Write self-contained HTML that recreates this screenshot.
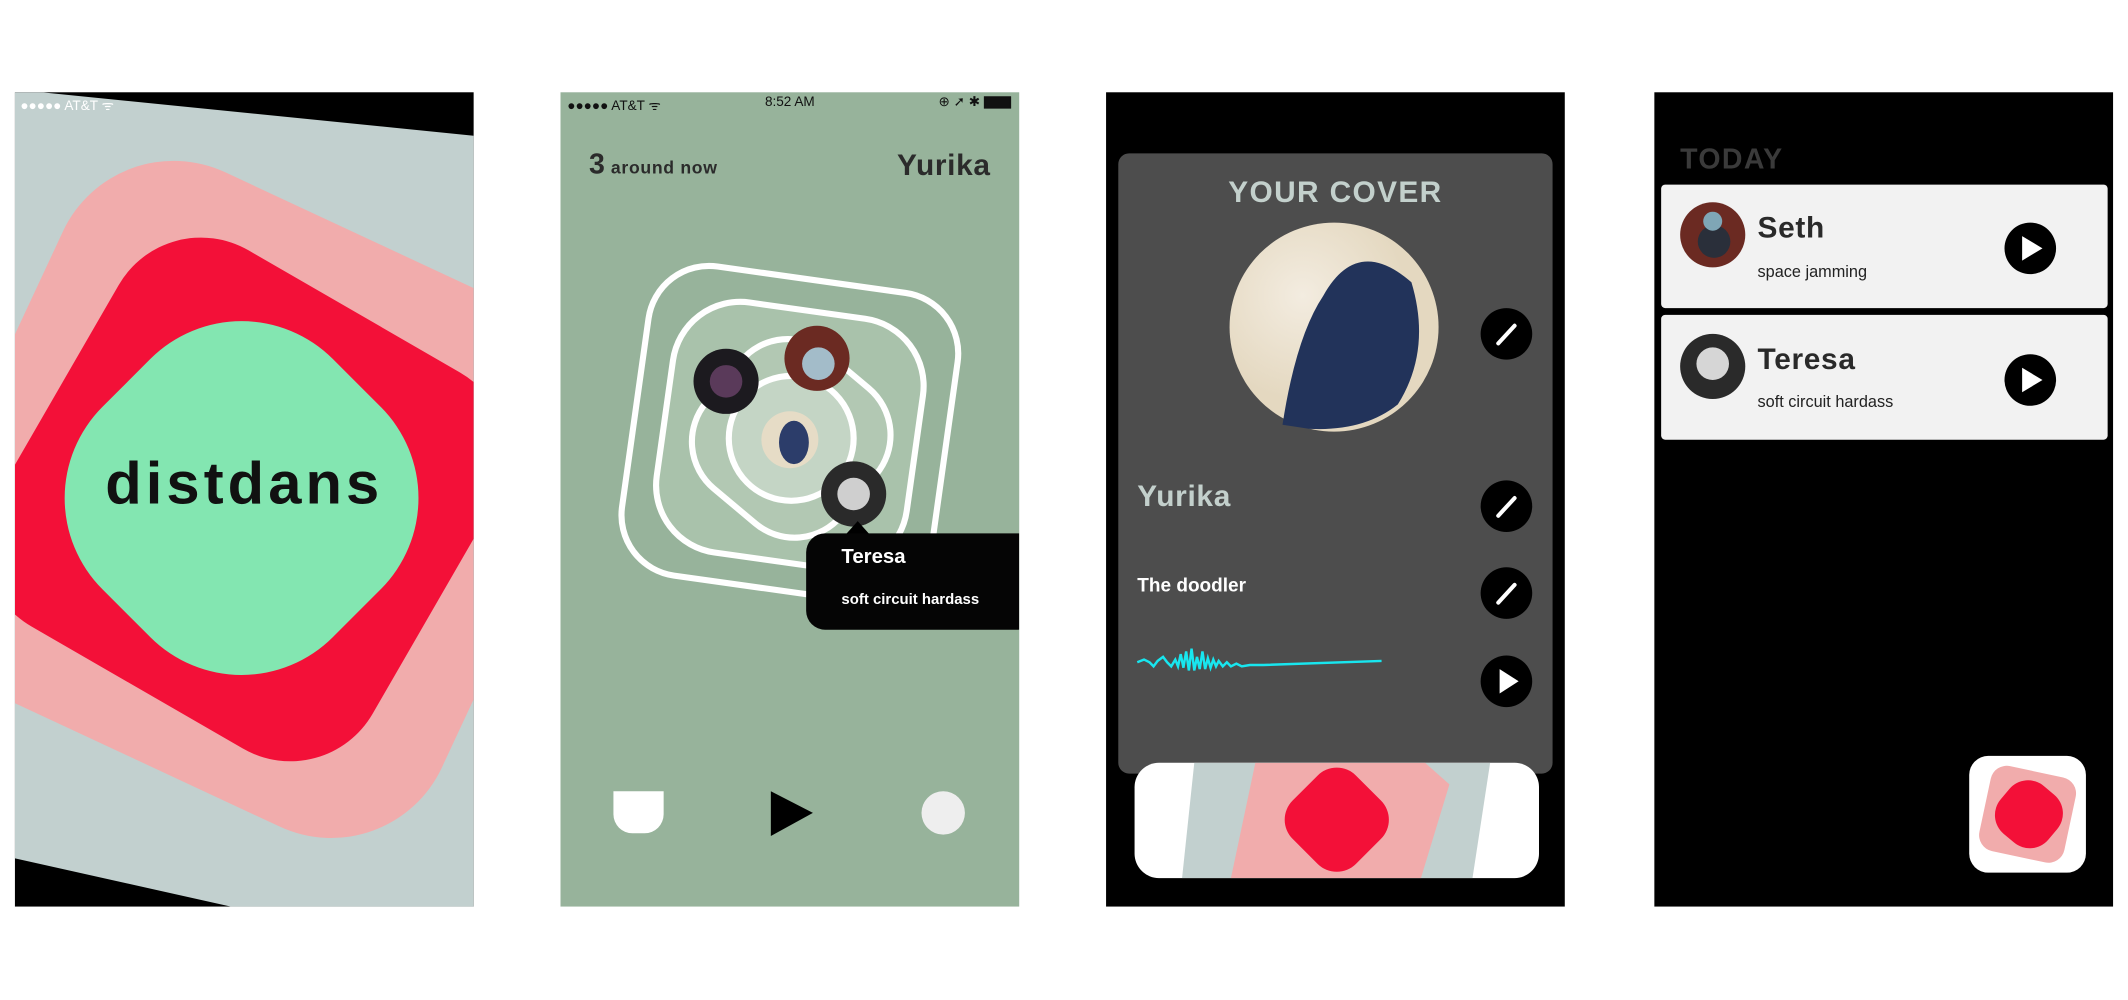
<!DOCTYPE html>
<html><head><meta charset="utf-8"><style>
html,body{margin:0;padding:0;background:#fff;width:2128px;height:1000px;overflow:hidden}
#w{position:absolute;left:0;top:0;width:1568px;height:737px;transform:scale(1.35714);transform-origin:0 0;font-family:"Liberation Sans",sans-serif}
.p{position:absolute;top:68px;width:338px;height:600px;overflow:hidden}
.a{position:absolute;white-space:nowrap}
</style></head><body><div id="w">

<!-- Panel 1 -->
<div class="p" style="left:11px;background:#000">
<svg width="338" height="600" style="position:absolute;left:0;top:0">
<polygon points="-20,-4 338,32 338,640 -20,560" fill="#c2d0cf"/>
<rect x="-35" y="90" width="420" height="420" rx="90" transform="rotate(25 175 300)" fill="#f1acac"/>
<rect x="10" y="140" width="320" height="320" rx="70" transform="rotate(30 170 300)" fill="#f31038"/>
<rect x="47" y="179" width="240" height="240" rx="95" transform="rotate(45 167 299)" fill="#83e6b1"/>
</svg>
<div class="a" style="left:4px;top:2px;color:#fff;font-size:10px">●●●●● AT&amp;T ᯤ</div>
<div class="a" style="left:0;width:338px;text-align:center;top:264px;font-size:44px;font-weight:bold;letter-spacing:3px;color:#111">distdans</div>
</div>

<!-- Panel 2 -->
<div class="p" style="left:413px;background:#97b39b">
<div class="a" style="left:5px;top:2px;font-size:10px;color:#111">●●●●● AT&amp;T ᯤ</div>
<div class="a" style="left:0;width:338px;text-align:center;top:2px;font-size:10px;color:#111">8:52 AM</div>
<div class="a" style="right:6px;top:2px;font-size:10px;color:#111">⊕ ➚ ✱ <span style="display:inline-block;width:18px;height:7px;background:#111;border:1px solid #111;vertical-align:middle"></span></div>
<div class="a" style="left:21px;top:42px;color:#2b2b2b;font-weight:bold"><span style="font-size:21px">3</span> <span style="font-size:13px;letter-spacing:.5px">around now</span></div>
<div class="a" style="right:21px;top:41px;color:#2b2b2b;font-weight:bold;font-size:22px;letter-spacing:.5px">Yurika</div>
<svg width="338" height="600" style="position:absolute;left:0;top:0">
<rect x="54" y="137" width="230" height="230" rx="45" transform="rotate(8 169 252)" fill="none" stroke="#fff" stroke-width="4.5"/>
<rect x="76" y="160" width="186" height="186" rx="50" transform="rotate(8 169 253)" fill="#a9c2ab" stroke="#fff" stroke-width="4.5"/>
<rect x="105" y="190" width="130" height="130" rx="45" transform="rotate(40 170 255)" fill="#b2c8b3" stroke="#fff" stroke-width="4.5"/>
<circle cx="170" cy="255" r="46" fill="#c4d5c5" stroke="#fff" stroke-width="4.5"/>
<circle cx="122" cy="213" r="24" fill="#1c1a1f"/><circle cx="122" cy="213" r="12" fill="#5a3a5a"/>
<circle cx="189" cy="196" r="24" fill="#6b2a22"/><circle cx="190" cy="200" r="12" fill="#a3bcc9"/>
<circle cx="169" cy="256" r="21" fill="#e6dcc6"/><ellipse cx="172" cy="258" rx="11" ry="16" fill="#2c3d6a"/>
<circle cx="216" cy="296" r="24" fill="#2a2a2a"/><circle cx="216" cy="296" r="12" fill="#cfcfcf"/>
<polygon points="219,316 228,326 210,326" fill="#000"/>
<rect x="181" y="325" width="170" height="71" rx="14" fill="#050505"/>
<path d="M39 515 h37 v17 a14 14 0 0 1 -14 14 h-9 a14 14 0 0 1 -14 -14 z" fill="#fff"/>
<polygon points="155,515 186,531 155,548" fill="#000"/>
<circle cx="282" cy="531" r="16" fill="#eeeeee"/>
</svg>
<div class="a" style="left:207px;top:334px;color:#fff;font-weight:bold;font-size:15px">Teresa</div>
<div class="a" style="left:207px;top:368px;color:#fff;font-weight:bold;font-size:11px">soft circuit hardass</div>
</div>

<!-- Panel 3 -->
<div class="p" style="left:815px;background:#000">
<div class="a" style="left:9px;top:45px;width:320px;height:457px;border-radius:8px;background:#4d4d4d"></div>
<div class="a" style="left:9px;width:320px;text-align:center;top:61px;color:#c3d0cc;font-weight:bold;font-size:22px;letter-spacing:1px">YOUR COVER</div>
<svg width="338" height="600" style="position:absolute;left:0;top:0">
<defs><radialGradient id="ph" cx="35%" cy="35%"><stop offset="0" stop-color="#f3ece0"/><stop offset="1" stop-color="#e4d8c0"/></radialGradient></defs>
<circle cx="168" cy="173" r="77" fill="url(#ph)"/>
<path d="M130 245 Q140 180 160 150 Q185 105 225 140 Q240 190 215 230 Q190 250 150 248 Z" fill="#22335a"/>
<g fill="#000"><circle cx="295" cy="178" r="19"/><circle cx="295" cy="305" r="19"/><circle cx="295" cy="369" r="19"/><circle cx="295" cy="434" r="19"/></g>
<g stroke="#fff" stroke-width="3" stroke-linecap="round"><line x1="289" y1="185" x2="301" y2="172"/><line x1="289" y1="312" x2="301" y2="299"/><line x1="289" y1="376" x2="301" y2="363"/></g>
<polygon points="290,425 304,434 290,443" fill="#fff"/>
<path d="M23 420 l5 -2 l4 2 l3 3 l3 -4 l4 -3 l3 4 l3 3 l3 -5 l2 5 l2 -9 l2 10 l2 -12 l2 14 l2 -16 l2 16 l2 -10 l2 9 l2 -13 l2 13 l2 -8 l2 7 l2 -6 l2 5 l2 -4 l3 4 l3 -3 l3 3 l4 -2 l4 2 l6 -1 l10 0 L203 419" fill="none" stroke="#18e6ef" stroke-width="1.8"/>
<rect x="21" y="494" width="298" height="85" rx="18" fill="#fff"/>
<clipPath id="cc"><rect x="21" y="494" width="298" height="85" rx="18"/></clipPath>
<g clip-path="url(#cc)">
<polygon points="65,494 283,494 270,579 56,579" fill="#c2d0cf"/>
<polygon points="110,494 235,494 253,510 232,579 92,579" fill="#f1acac"/>
<rect x="137" y="503" width="66" height="66" rx="20" transform="rotate(45 170 536)" fill="#f31038"/>
</g>
</svg>
<div class="a" style="left:23px;top:285px;color:#c3d0cc;font-weight:bold;font-size:22px;letter-spacing:.5px">Yurika</div>
<div class="a" style="left:23px;top:355px;color:#fff;font-weight:bold;font-size:14px">The doodler</div>
</div>

<!-- Panel 4 -->
<div class="p" style="left:1219px;background:#000">
<div class="a" style="left:19px;top:38px;color:#3a3a3a;font-weight:bold;font-size:21px;letter-spacing:1px">TODAY</div>
<div class="a" style="left:5px;top:68px;width:329px;height:91px;background:#f2f2f2;border-radius:3px"></div>
<div class="a" style="left:5px;top:164px;width:329px;height:92px;background:#f2f2f2;border-radius:3px"></div>
<svg width="338" height="600" style="position:absolute;left:0;top:0">
<circle cx="43" cy="105" r="24" fill="#6b2a22"/><circle cx="44" cy="110" r="12" fill="#2a2f3a"/><circle cx="43" cy="95" r="7" fill="#7fa6b6"/>
<circle cx="43" cy="202" r="24" fill="#2a2a2a"/><circle cx="43" cy="200" r="12" fill="#d6d6d6"/>
<circle cx="277" cy="115" r="19" fill="#000"/><polygon points="271,106 286,115 271,124" fill="#fff"/>
<circle cx="277" cy="212" r="19" fill="#000"/><polygon points="271,203 286,212 271,221" fill="#fff"/>
<rect x="232" y="489" width="86" height="86" rx="14" fill="#fff"/>
<rect x="243" y="500" width="64" height="64" rx="12" transform="rotate(12 275 532)" fill="#f1acac"/>
<rect x="253" y="509" width="46" height="46" rx="18" transform="rotate(40 276 532)" fill="#f31038"/>
</svg>
<div class="a" style="left:76px;top:87px;color:#2a2a2a;font-weight:bold;font-size:22px;letter-spacing:.5px">Seth</div>
<div class="a" style="left:76px;top:125px;color:#222;font-size:12px">space jamming</div>
<div class="a" style="left:76px;top:184px;color:#2a2a2a;font-weight:bold;font-size:22px;letter-spacing:.5px">Teresa</div>
<div class="a" style="left:76px;top:221px;color:#222;font-size:12px">soft circuit hardass</div>
</div>

</div></body></html>
